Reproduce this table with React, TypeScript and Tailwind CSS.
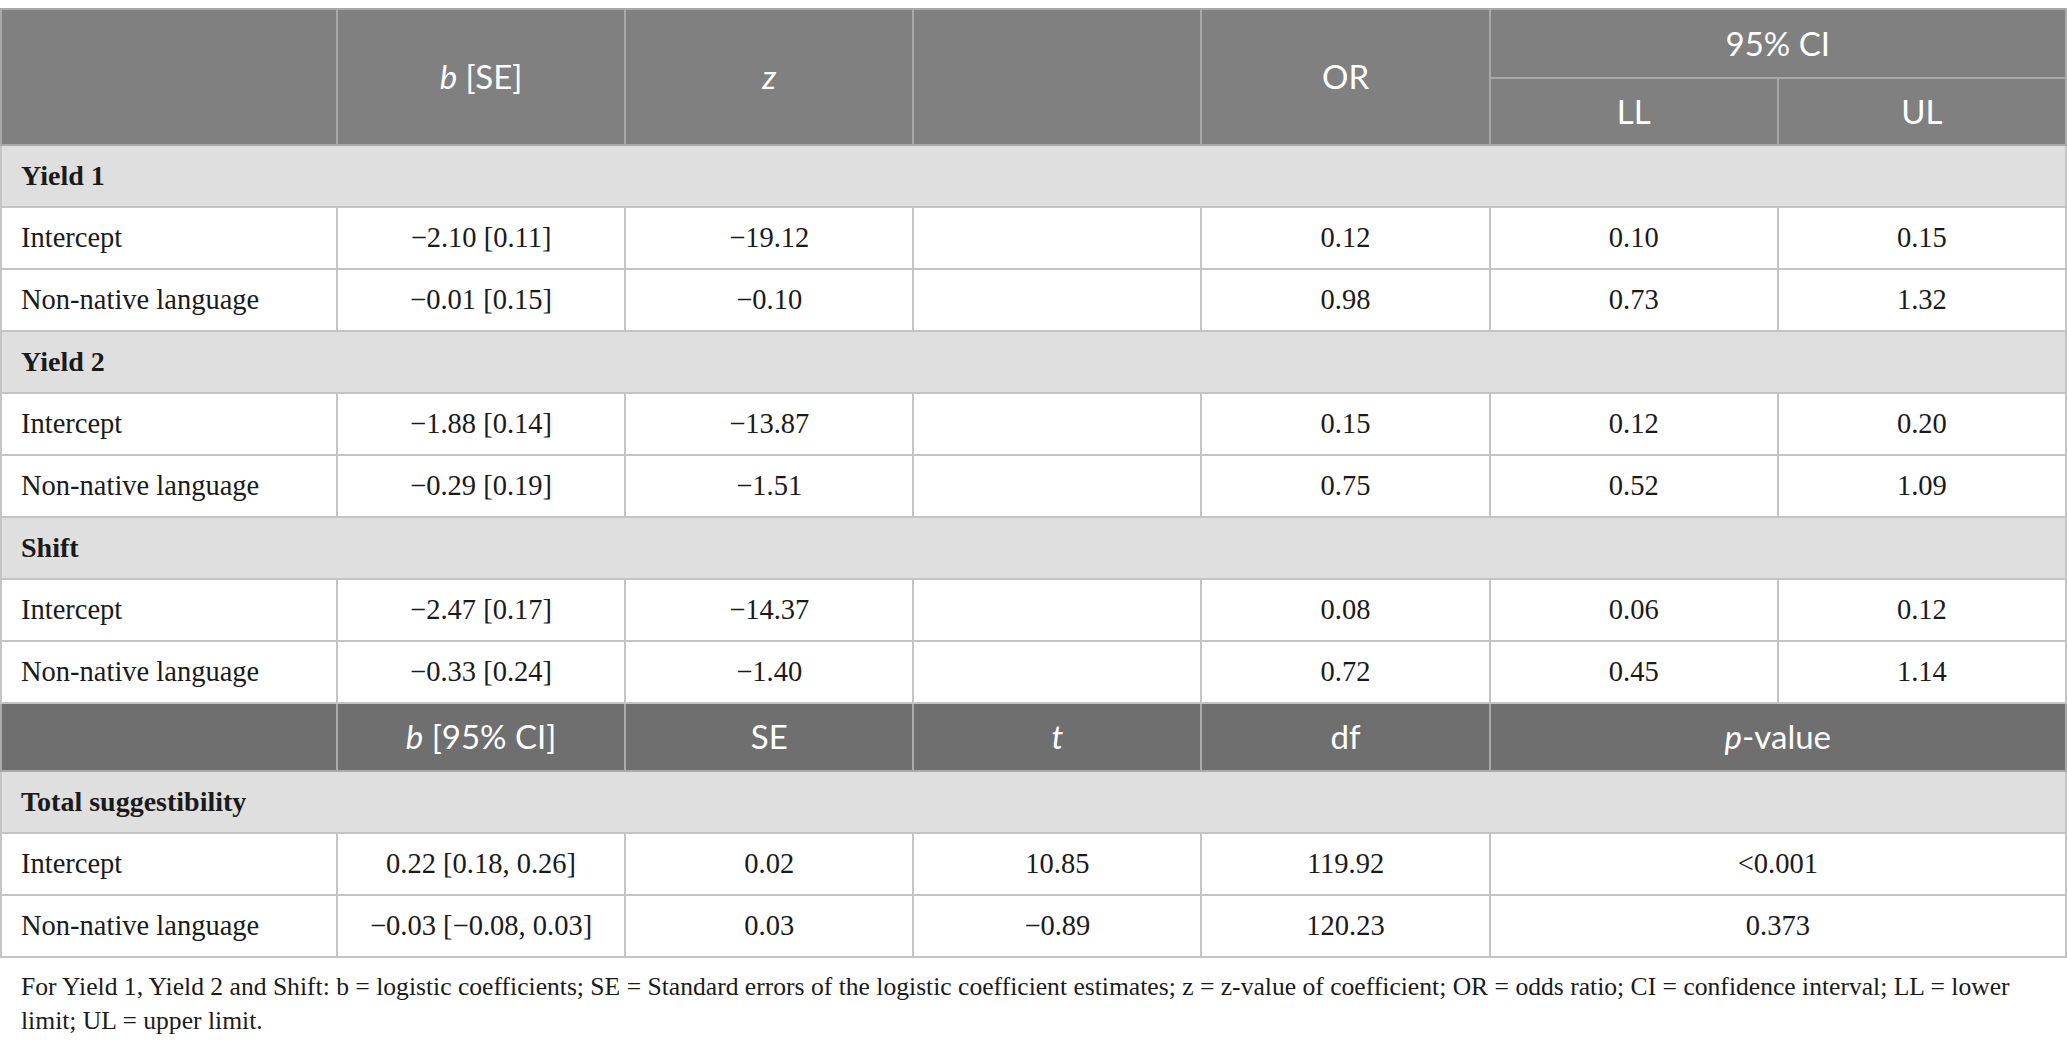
import type { ReactNode } from 'react'

type Row = [string, string, string, string, string, string, string]

const SECTIONS: { title: string; rows: Row[] }[] = [
  {
    title: 'Yield 1',
    rows: [
      ['Intercept', '−2.10 [0.11]', '−19.12', '', '0.12', '0.10', '0.15'],
      ['Non-native language', '−0.01 [0.15]', '−0.10', '', '0.98', '0.73', '1.32'],
    ],
  },
  {
    title: 'Yield 2',
    rows: [
      ['Intercept', '−1.88 [0.14]', '−13.87', '', '0.15', '0.12', '0.20'],
      ['Non-native language', '−0.29 [0.19]', '−1.51', '', '0.75', '0.52', '1.09'],
    ],
  },
  {
    title: 'Shift',
    rows: [
      ['Intercept', '−2.47 [0.17]', '−14.37', '', '0.08', '0.06', '0.12'],
      ['Non-native language', '−0.33 [0.24]', '−1.40', '', '0.72', '0.45', '1.14'],
    ],
  },
]

const TOTAL: [string, string, string, string, string, string][] = [
  ['Intercept', '0.22 [0.18, 0.26]', '0.02', '10.85', '119.92', '<0.001'],
  ['Non-native language', '−0.03 [−0.08, 0.03]', '0.03', '−0.89', '120.23', '0.373'],
]

const serif = "font-['Liberation_Serif',serif]"
const sans = "font-['Lato','Noto_Sans',sans-serif]"

function H({ children, rowSpan, colSpan, dark }: { children?: ReactNode; rowSpan?: number; colSpan?: number; dark?: boolean }) {
  return (
    <th
      rowSpan={rowSpan}
      colSpan={colSpan}
      className={`border-2 border-[#a9a9a9] ${dark ? 'bg-[#6f6f6f]' : 'bg-[#808080]'} text-white font-normal text-[33px] text-center align-middle p-0 ${sans}`}
    >
      {children}
    </th>
  )
}

function Section({ title }: { title: string }) {
  return (
    <tr className="h-[62px]">
      <td colSpan={7} className={`border-2 border-[#c4c4c4] bg-[#e0dfe0] pl-[19px] text-[28px] font-bold text-[#1a1a1a] ${serif}`}>
        {title}
      </td>
    </tr>
  )
}

function Cell({ children, left, colSpan }: { children: ReactNode; left?: boolean; colSpan?: number }) {
  return (
    <td
      colSpan={colSpan}
      className={`border-2 border-[#c4c4c4] bg-white text-[28.5px] text-[#1a1a1a] ${left ? 'text-left pl-[19px]' : 'text-center'} ${serif}`}
    >
      {children}
    </td>
  )
}

export default function App() {
  return (
    <div className="w-[2067px] h-[1049px] bg-white pt-[8px] overflow-hidden">
      <table className="w-full border-collapse table-fixed">
        <colgroup>
          <col className="w-[336px]" />
          <col />
          <col />
          <col />
          <col />
          <col />
          <col />
        </colgroup>
        <thead>
          <tr className="h-[69px]">
            <H rowSpan={2} />
            <H rowSpan={2}><i>b</i> [SE]</H>
            <H rowSpan={2}><i>z</i></H>
            <H rowSpan={2} />
            <H rowSpan={2}>OR</H>
            <H colSpan={2}>95% CI</H>
          </tr>
          <tr className="h-[67px]">
            <H>LL</H>
            <H>UL</H>
          </tr>
        </thead>
        <tbody>
          {SECTIONS.map(s => (
            <>
              <Section key={s.title} title={s.title} />
              {s.rows.map((r, i) => (
                <tr key={s.title + i} className="h-[62px]">
                  {r.map((v, j) => (
                    <Cell key={j} left={j === 0}>{v}</Cell>
                  ))}
                </tr>
              ))}
            </>
          ))}
          <tr className="h-[68px]">
            <H dark />
            <H dark><i>b</i> [95% CI]</H>
            <H dark>SE</H>
            <H dark><i>t</i></H>
            <H dark>df</H>
            <H dark colSpan={2}><i>p</i>-value</H>
          </tr>
          <Section title="Total suggestibility" />
          {TOTAL.map((r, i) => (
            <tr key={i} className="h-[62px]">
              {r.map((v, j) => (
                <Cell key={j} left={j === 0} colSpan={j === 5 ? 2 : undefined}>{v}</Cell>
              ))}
            </tr>
          ))}
        </tbody>
      </table>
      <p className={`pl-[21px] pr-[20px] mt-[12px] text-[25.6px] leading-[34px] text-[#1a1a1a] ${serif}`}>
        <span className="whitespace-nowrap">
          For Yield 1, Yield 2 and Shift: b = logistic coefficients; SE = Standard errors of the logistic coefficient estimates; z = z-value of coefficient; OR = odds ratio; CI = confidence interval; LL = lower
        </span>
        <br />
        limit; UL = upper limit.
      </p>
    </div>
  )
}
